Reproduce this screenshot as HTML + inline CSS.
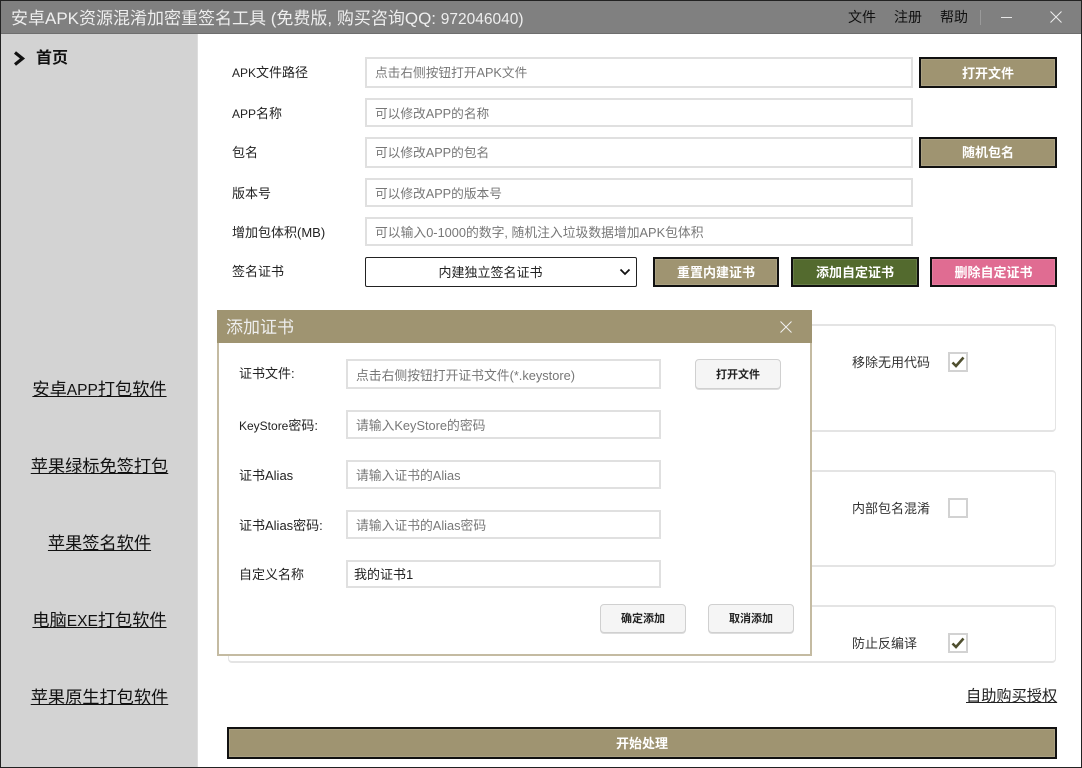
<!DOCTYPE html>
<html lang="zh">
<head>
<meta charset="utf-8">
<style>
html,body{margin:0;padding:0;background:#fff}
body{width:1082px;height:768px;position:relative;overflow:hidden;font-family:"Liberation Sans","Noto Sans CJK SC",sans-serif;color:#222}
div,a,svg{position:absolute;box-sizing:border-box}
.t{white-space:nowrap;font-size:13px;line-height:20px;height:20px}
.in{background:#fff;border:2px solid #e0e0e0;font-size:12.7px;color:#777;padding-left:8px;white-space:nowrap}
.b{background:#9f9471;border:2px solid #111;color:#fff;font-weight:bold;font-size:13px;text-align:center;white-space:nowrap;box-shadow:inset 0 0 0 1px rgba(255,255,255,.12)}
.d{background:#f5f5f5;border:1px solid #d0d0d0;border-radius:4px;color:#222;font-weight:bold;font-size:11px;text-align:center;white-space:nowrap;box-shadow:0 1px 0 #ddd}
.l{left:1px;width:197px;text-align:center;font-size:17.2px;line-height:24px;height:24px;color:#111;text-decoration:underline;white-space:nowrap}
.l span{font-size:15.5px}
.g{border:1px solid #e4e4e4;border-radius:4px;background:#fff;border-width:2px 1px}
.c{width:20px;height:20px;border:2px solid #d2d2d2;background:#fff}
.in2{background:#fff;border:2px solid #e0e0e0;font-size:12.8px;color:#777;padding-left:8px;white-space:nowrap;left:346px;width:315px}
.n{font-size:12px}
</style>
</head>
<body>
<div style="left:0;top:0;width:1082px;height:768px;border:1px solid #222;z-index:20;pointer-events:none"></div>
<div style="left:0;top:0;width:1082px;height:34px;background:#808080;border-bottom:1px solid #6e6e6e"></div>
<div class="t" style="left:11px;top:7px;font-size:17px;line-height:24px;height:24px;color:#eee">安卓APK资源混淆加密重签名工具 (免费版, 购买咨询QQ: <span style="font-size:15.500px">972046040)</span></div>
<div class="t" style="left:848px;top:7px;font-size:14px;color:#111">文件</div>
<div class="t" style="left:894px;top:7px;font-size:14px;color:#111">注册</div>
<div class="t" style="left:940px;top:7px;font-size:14px;color:#111">帮助</div>
<div style="left:980px;top:10px;width:1px;height:15px;background:#9a9a9a"></div>
<div style="left:1001px;top:17px;width:11px;height:1px;background:#e8e8e8"></div>
<svg style="left:1050px;top:11px" width="12" height="12" viewBox="0 0 12 12"><path d="M.5.5l11 11M11.500 .5l-11 11" stroke="#eee" stroke-width="1" fill="none"/></svg>

<div style="left:1px;top:34px;width:197px;height:733px;background:#d3d3d3;border-right:1px solid #ddd"></div>
<svg style="left:13px;top:51px" width="13" height="15" viewBox="0 0 13 15"><path d="M2 1.500L9.500 7.500L2 13.500" stroke="#111" stroke-width="3.200" fill="none"/></svg>
<div class="t" style="left:36px;top:49px;font-size:16px;font-weight:bold;color:#111">首页</div>
<a class="l" style="top:377px">安卓<span>APP</span>打包软件</a>
<a class="l" style="top:454px">苹果绿标免签打包</a>
<a class="l" style="top:531px">苹果签名软件</a>
<a class="l" style="top:608px">电脑<span>EXE</span>打包软件</a>
<a class="l" style="top:685px">苹果原生打包软件</a>

<div class="t" style="left:232px;top:63px"><span class="n">APK</span>文件路径</div>
<div class="in" style="left:365px;top:57px;width:548px;height:31px;line-height:29px">点击右侧按钮打开APK文件</div>
<div class="b" style="left:919px;top:57px;width:138px;height:31px;line-height:30px">打开文件</div>

<div class="t" style="left:232px;top:104px"><span class="n">APP</span>名称</div>
<div class="in" style="left:365px;top:98px;width:548px;height:29px;line-height:28px">可以修改APP的名称</div>

<div class="t" style="left:232px;top:143px">包名</div>
<div class="in" style="left:365px;top:137px;width:548px;height:31px;line-height:29px">可以修改APP的包名</div>
<div class="b" style="left:919px;top:137px;width:138px;height:31px;line-height:28px">随机包名</div>

<div class="t" style="left:232px;top:184px">版本号</div>
<div class="in" style="left:365px;top:178px;width:548px;height:29px;line-height:28px">可以修改APP的版本号</div>

<div class="t" style="left:232px;top:223px">增加包体积(MB)</div>
<div class="in" style="left:365px;top:217px;width:548px;height:29px;line-height:28px;font-size:12.800px">可以输入0-1000的数字, 随机注入垃圾数据增加APK包体积</div>

<div class="t" style="left:232px;top:262px">签名证书</div>
<div style="left:365px;top:257px;width:272px;height:30px;border:1px solid #222;border-radius:2px;background:#fff;font-size:13px;line-height:29px;text-align:center;color:#222;padding-right:21px">内建独立签名证书</div>
<svg style="left:619px;top:268px" width="12" height="8" viewBox="0 0 12 8"><path d="M1.500 1.500L6 6L10.500 1.500" stroke="#111" stroke-width="1.800" fill="none"/></svg>
<div class="b" style="left:653px;top:257px;width:126px;height:30px;line-height:27px">重置内建证书</div>
<div class="b" style="left:791px;top:257px;width:128px;height:30px;line-height:27px;background:#536a2e">添加自定证书</div>
<div class="b" style="left:930px;top:257px;width:127px;height:30px;line-height:27px;background:#e06c92">删除自定证书</div>

<div class="g" style="left:228px;top:324px;width:828px;height:108px"></div>
<div class="t" style="left:852px;top:353px;color:#333">移除无用代码</div>
<div class="c" style="left:948px;top:352px"></div>
<svg style="left:951px;top:356px" width="14" height="12" viewBox="0 0 14 12"><path d="M1.500 6.500L5 10L12.500 1.500" stroke="#4f4f2f" stroke-width="2.600" fill="none"/></svg>

<div class="g" style="left:228px;top:470px;width:828px;height:97px"></div>
<div class="t" style="left:852px;top:499px;color:#333">内部包名混淆</div>
<div class="c" style="left:948px;top:498px"></div>

<div class="g" style="left:228px;top:605px;width:828px;height:58px"></div>
<div class="t" style="left:852px;top:634px;color:#333">防止反编译</div>
<div class="c" style="left:948px;top:633px"></div>
<svg style="left:951px;top:637px" width="14" height="12" viewBox="0 0 14 12"><path d="M1.500 6.500L5 10L12.500 1.500" stroke="#4f4f2f" stroke-width="2.600" fill="none"/></svg>

<a class="t" style="left:966px;top:686px;font-size:15.200px;line-height:22px;height:22px;color:#222;text-decoration:underline">自助购买授权</a>

<div class="b" style="left:227px;top:727px;width:830px;height:32px;line-height:30px">开始处理</div>

<!-- dialog -->
<div style="left:217px;top:310px;width:595px;height:346px;background:#fff;border:2px solid #c4bba2;border-top:0;z-index:5"></div>
<div style="left:217px;top:310px;width:595px;height:33px;background:#9f9471;z-index:6"></div>
<div class="t" style="left:226px;top:316px;font-size:17px;line-height:24px;height:24px;color:#eee;z-index:7">添加证书</div>
<svg style="left:780px;top:321px;z-index:7" width="12" height="12" viewBox="0 0 12 12"><path d="M.5.5l11 11M11.500 .5l-11 11" stroke="#f2f2f2" stroke-width="1" fill="none"/></svg>

<div style="left:0;top:0;z-index:8;width:1082px;height:768px">
<div class="t" style="left:239px;top:364px;color:#222">证书文件:</div>
<div class="in2" style="top:359px;height:30px;line-height:29px">点击右侧按钮打开证书文件(*.keystore)</div>
<div class="d" style="left:695px;top:359px;width:86px;height:30px;line-height:30px">打开文件</div>

<div class="t" style="left:239px;top:416px;color:#222"><span style="font-size:12px">KeyStore</span>密码:</div>
<div class="in2" style="top:410px;height:29px;line-height:28px">请输入KeyStore的密码</div>

<div class="t" style="left:239px;top:466px;color:#222">证书Alias</div>
<div class="in2" style="top:460px;height:29px;line-height:28px">请输入证书的Alias</div>

<div class="t" style="left:239px;top:516px;color:#222">证书Alias密码:</div>
<div class="in2" style="top:510px;height:29px;line-height:28px">请输入证书的Alias密码</div>

<div class="t" style="left:239px;top:565px;color:#222">自定义名称</div>
<div class="in2" style="top:560px;height:28px;line-height:25px;color:#222;padding-left:6px;font-size:13px">我的证书1</div>

<div class="d" style="left:600px;top:604px;width:86px;height:29px;line-height:28px">确定添加</div>
<div class="d" style="left:708px;top:604px;width:86px;height:29px;line-height:28px">取消添加</div>
</div>
</body>
</html>
